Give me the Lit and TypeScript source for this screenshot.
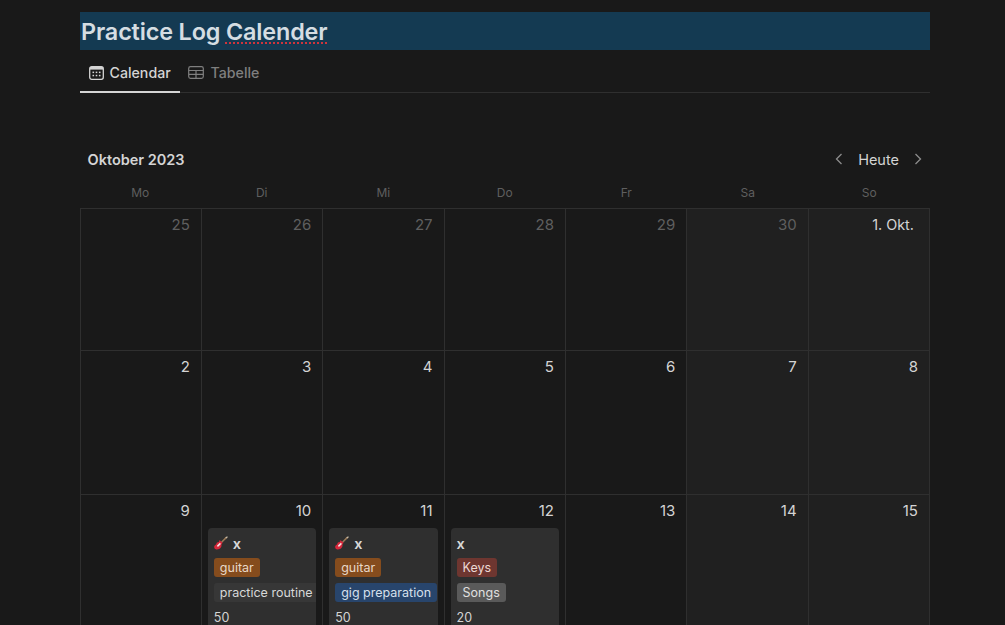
import { LitElement, html, css } from "lit";
import { customElement } from "lit/decorators.js";

const guitar = html`<svg class="guitar" viewBox="0 0 14 14" width="14" height="14">
  <path d="M6.8 7 L12.4 1.4" stroke="#9a7a58" stroke-width="1.5" fill="none"/>
  <path d="M11.4 1.6 L13 .2 L13.9 1 L12.5 2.6 Z" fill="#c9bca8"/>
  <path d="M5.4 4.2 C6.2 4.2 6.6 5 7 5.6 C7.6 6 8.6 6.2 8.4 7 C8.2 7.6 7.6 7.8 7.4 8.4 C7.6 9.4 7.6 10.2 7 11.2 C6 12.8 3.8 13.8 2.2 13.4 C.8 13 0 11.8 .2 10.4 C.4 9.2 1.6 9 2.2 8.2 C2.6 7.6 2.4 6.8 3.2 6.4 C4 6 4.6 6.4 5 5.8 C5.2 5.4 5 4.6 5.4 4.2 Z" fill="#d8283c"/>
  <path d="M3.4 10.4 L6.4 7.4" stroke="#f6e8e8" stroke-width="1.5" fill="none"/>
</svg>`;

interface Tag { label: string; cls: string }
interface Card { emoji: boolean; tags: Tag[]; num: string }
interface Day { label: string; muted?: boolean; weekend?: boolean; month?: boolean; card?: Card }

const days: Day[] = [
  { label: "25", muted: true }, { label: "26", muted: true }, { label: "27", muted: true },
  { label: "28", muted: true }, { label: "29", muted: true }, { label: "30", muted: true, weekend: true },
  { label: "1. Okt.", weekend: true, month: true },
  { label: "2" }, { label: "3" }, { label: "4" }, { label: "5" }, { label: "6" },
  { label: "7", weekend: true }, { label: "8", weekend: true },
  { label: "9" },
  { label: "10", card: { emoji: true, num: "50", tags: [{ label: "guitar", cls: "orange" }, { label: "practice routine", cls: "plain" }] } },
  { label: "11", card: { emoji: true, num: "50", tags: [{ label: "guitar", cls: "orange" }, { label: "gig preparation", cls: "blue" }] } },
  { label: "12", card: { emoji: false, num: "20", tags: [{ label: "Keys", cls: "red" }, { label: "Songs", cls: "gray" }] } },
  { label: "13" }, { label: "14", weekend: true }, { label: "15", weekend: true },
];

@customElement("app-root")
export class AppRoot extends LitElement {
  static styles = css`
    :host { display: block; height: 625px; overflow: hidden; background: #191919; color: #d4d4d4;
      font-family: Inter, "Liberation Sans", sans-serif; }
    .page { padding: 12px 75px 0 79.5px; }
    .title { height: 38px; background: #143a52; color: #d5dde2; font-size: 23.4px; font-weight: 600;
      line-height: 39px; padding-left: 1.5px; letter-spacing: -0.15px; }
    .sp { text-decoration: underline dotted #d0343c 1.5px; text-underline-offset: 2px; }
    .tabs { display: flex; height: 43px; border-bottom: 1px solid #2f2f2f; box-sizing: border-box; }
    .tab { display: flex; align-items: center; gap: 7px; padding: 2px 8px 0 8px; font-size: 14.2px; font-weight: 500;
      color: #7f7f7f; box-sizing: border-box; height: 43px; }
    .tab.on { color: #d4d4d4; border-bottom: 2px solid #d4d4d4; width: 100px; padding: 4px 0 0 9px; gap: 6px; }
    .tab svg { flex: none; }
    .head { display: flex; align-items: center; justify-content: space-between; margin-top: 53px; height: 26px; padding: 0 8px; }
    .month { font-size: 14.5px; font-weight: 600; color: #d4d4d4; }
    .nav { display: flex; align-items: center; gap: 15px; font-size: 14.5px; color: #d4d4d4; }
    .wk { display: grid; grid-template-columns: repeat(7, 1fr); margin-top: 11px; height: 25px; }
    .wk div { text-align: center; font-size: 12px; color: #5f5f5f; line-height: 19px; }
    .grid { display: grid; grid-template-columns: repeat(7, 1fr); grid-template-rows: 142px 144px 150px;
      border-top: 1px solid #2f2f2f; border-left: 1px solid #2f2f2f; }
    .cell { border-right: 1px solid #2f2f2f; border-bottom: 1px solid #2f2f2f; padding: 6px 6px 0 6px; min-width: 0; box-sizing: border-box; }
    .cell.we { background: #202020; }
    .n { text-align: right; font-size: 15px; line-height: 19px; color: #d4d4d4; padding-right: 5px; height: 20px; }
    .n.m { color: #5f5f5f; }
    .n.okt { padding-right: 9px; font-size: 14.4px; }
    .card { background: #2f2f2f; border-radius: 4px; margin-top: 7px; padding: 5px 6px; height: 110px; box-sizing: border-box; overflow: hidden; }
    .t { display: flex; align-items: center; gap: 5px; height: 20px; font-size: 14.5px; font-weight: 600; color: #d8d8d8; margin-bottom: 5px; }
    .guitar { flex: none; }
    .tag { display: block; width: max-content; height: 19px; line-height: 19px; font-size: 12.5px; padding: 0 6px; border-radius: 3px; color: #dcdcdc; margin-bottom: 6px; white-space: nowrap; }
    .orange { background: #854c1d; color: #e8d8c8; }
    .blue { background: #28456c; color: #d6e0ec; }
    .red { background: #6e3630; color: #ecd8d4; }
    .gray { background: #5a5a5a; color: #e0e0e0; }
    .plain { background: #373737; color: #d8d8d8; }
    .num { font-size: 12.5px; color: #d4d4d4; line-height: 18px; margin-top: 7px; }
  `;

  private card(c: Card) {
    return html`<div class="card">
      <div class="t">${c.emoji ? guitar : ""}<span>x</span></div>
      ${c.tags.map((t) => html`<span class="tag ${t.cls}">${t.label}</span>`)}
      <div class="num">${c.num}</div>
    </div>`;
  }

  render() {
    return html`<div class="page">
      <div class="title">Practice Log <span class="sp">Calender</span></div>
      <div class="tabs">
        <div class="tab on">
          <svg width="15" height="14" viewBox="0 0 15 14" fill="none"><rect x=".7" y=".7" width="13.6" height="12.6" rx="2" stroke="currentColor" stroke-width="1.3"/><rect x="1" y="1" width="13" height="2.6" fill="currentColor"/><g fill="currentColor"><rect x="3.5" y="5.6" width="1.6" height="1.5"/><rect x="6.7" y="5.6" width="1.6" height="1.5"/><rect x="9.9" y="5.6" width="1.6" height="1.5"/><rect x="3.5" y="8.8" width="1.6" height="1.5"/><rect x="6.7" y="8.8" width="1.6" height="1.5"/><rect x="9.9" y="8.8" width="1.6" height="1.5"/></g></svg>
          Calendar
        </div>
        <div class="tab">
          <svg width="16" height="13" viewBox="0 0 16 13" fill="none" stroke="currentColor" stroke-width="1.2"><rect x=".7" y=".7" width="14.6" height="11.6" rx="1.8"/><path d="M.7 4.5H15.3M.7 8.3H15.3M8 4.5V12.3"/></svg>
          Tabelle
        </div>
      </div>
      <div class="head">
        <div class="month">Oktober 2023</div>
        <div class="nav">
          <svg width="8" height="12" viewBox="0 0 8 12" fill="none" stroke="#8c8c8c" stroke-width="1.3"><path d="M6.5 1 L1.5 6 L6.5 11"/></svg>
          <span>Heute</span>
          <svg width="8" height="12" viewBox="0 0 8 12" fill="none" stroke="#8c8c8c" stroke-width="1.3"><path d="M1.5 1 L6.5 6 L1.5 11"/></svg>
        </div>
      </div>
      <div class="wk">${["Mo", "Di", "Mi", "Do", "Fr", "Sa", "So"].map((d) => html`<div>${d}</div>`)}</div>
      <div class="grid">
        ${days.map((d) => html`<div class="cell ${d.weekend ? "we" : ""}">
          <div class="n ${d.muted ? "m" : ""} ${d.month ? "okt" : ""}">${d.label}</div>
          ${d.card ? this.card(d.card) : ""}
        </div>`)}
      </div>
    </div>`;
  }
}
